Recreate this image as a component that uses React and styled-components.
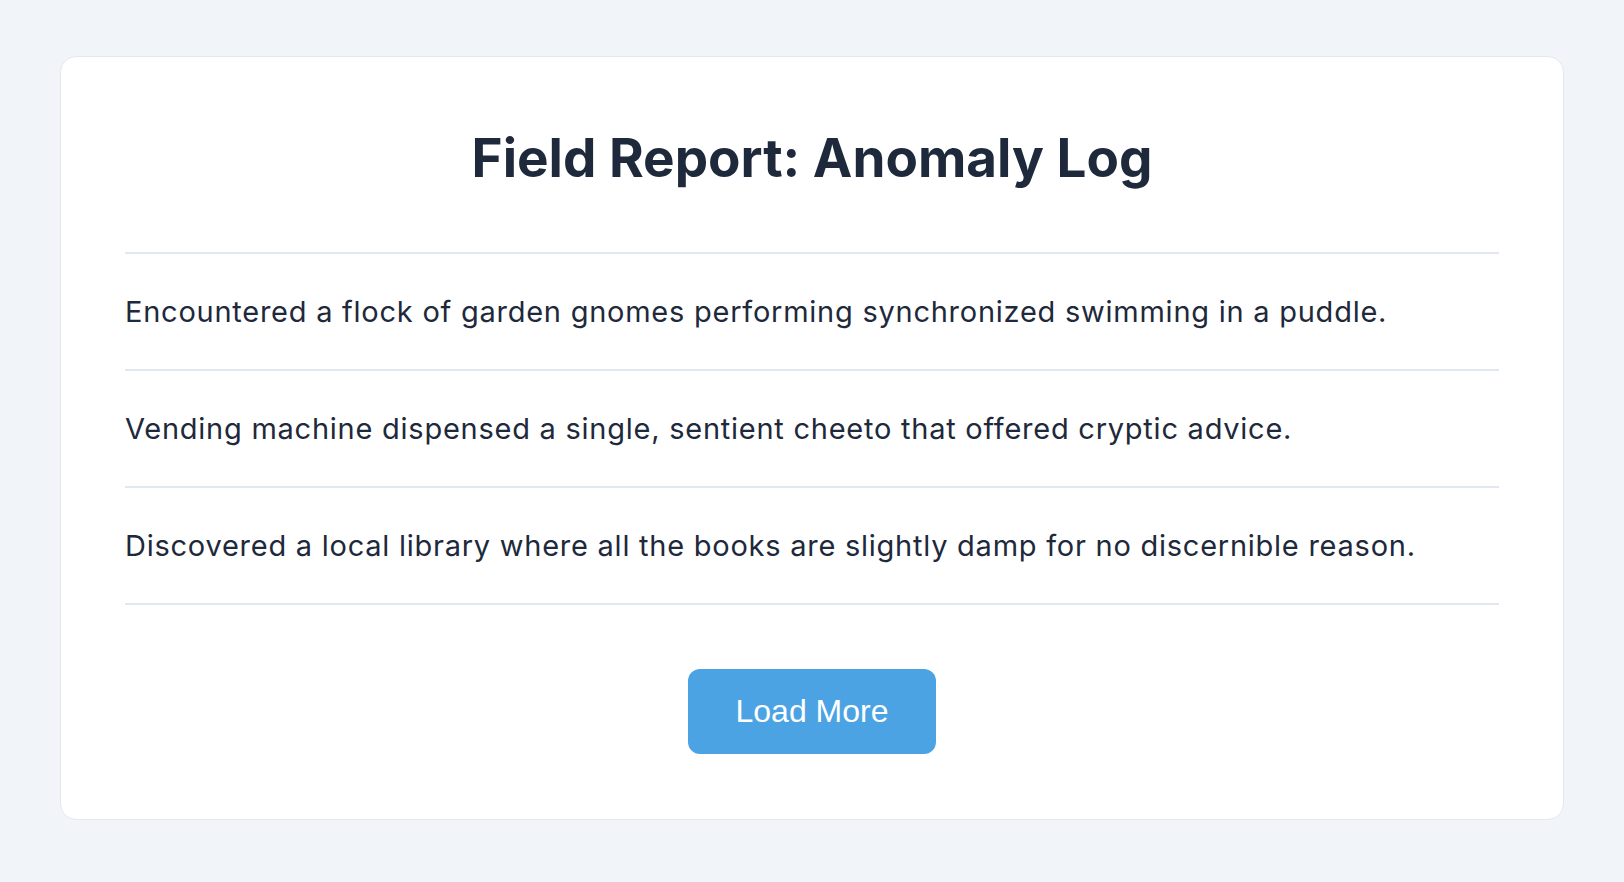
import styled, { createGlobalStyle } from "styled-components";

const GlobalStyle = createGlobalStyle`
  html, body {
    margin: 0;
    background-color: #f1f5f9;
  }

  body {
    font-family: Inter, "Noto Sans", sans-serif;
    color: #1e293b;
  }
`;

const Page = styled.main`
  padding: 56px 60px;
`;

const Card = styled.section`
  background: #ffffff;
  border: 1px solid #e2e8f0;
  border-radius: 16px;
  padding: 64px 64px 65px;
  display: flex;
  flex-direction: column;
  align-items: center;
`;

const Title = styled.h1`
  margin: 5px 0 62px;
  font-size: 53px;
  font-weight: 700;
  line-height: normal;
  text-align: center;
  color: #1e293b;
`;

const LogList = styled.ul`
  list-style: none;
  margin: 0;
  padding: 0;
  width: 100%;
  border-top: 2px solid #e2e8f0;
`;

const LogItem = styled.li`
  padding: 36px 0;
  font-size: 29px;
  line-height: 43px;
  letter-spacing: 0.75px;
  border-bottom: 2px solid #e2e8f0;
`;

const LoadButton = styled.button`
  margin-top: 64px;
  padding: 24px 48px;
  background-color: #4ba3e3;
  color: #ffffff;
  border: none;
  border-radius: 12px;
  font-family: "Liberation Sans", Arial, sans-serif;
  font-size: 32px;
  cursor: pointer;

  &:hover {
    background-color: #3b93d3;
  }
`;

const entries = [
  "Encountered a flock of garden gnomes performing synchronized swimming in a puddle.",
  "Vending machine dispensed a single, sentient cheeto that offered cryptic advice.",
  "Discovered a local library where all the books are slightly damp for no discernible reason.",
];

const App = () => {
  return (
    <>
      <GlobalStyle />
      <Page>
        <Card>
          <Title>Field Report: Anomaly Log</Title>
          <LogList>
            {entries.map((entry) => (
              <LogItem key={entry}>{entry}</LogItem>
            ))}
          </LogList>
          <LoadButton>Load More</LoadButton>
        </Card>
      </Page>
    </>
  );
};

export default App;
